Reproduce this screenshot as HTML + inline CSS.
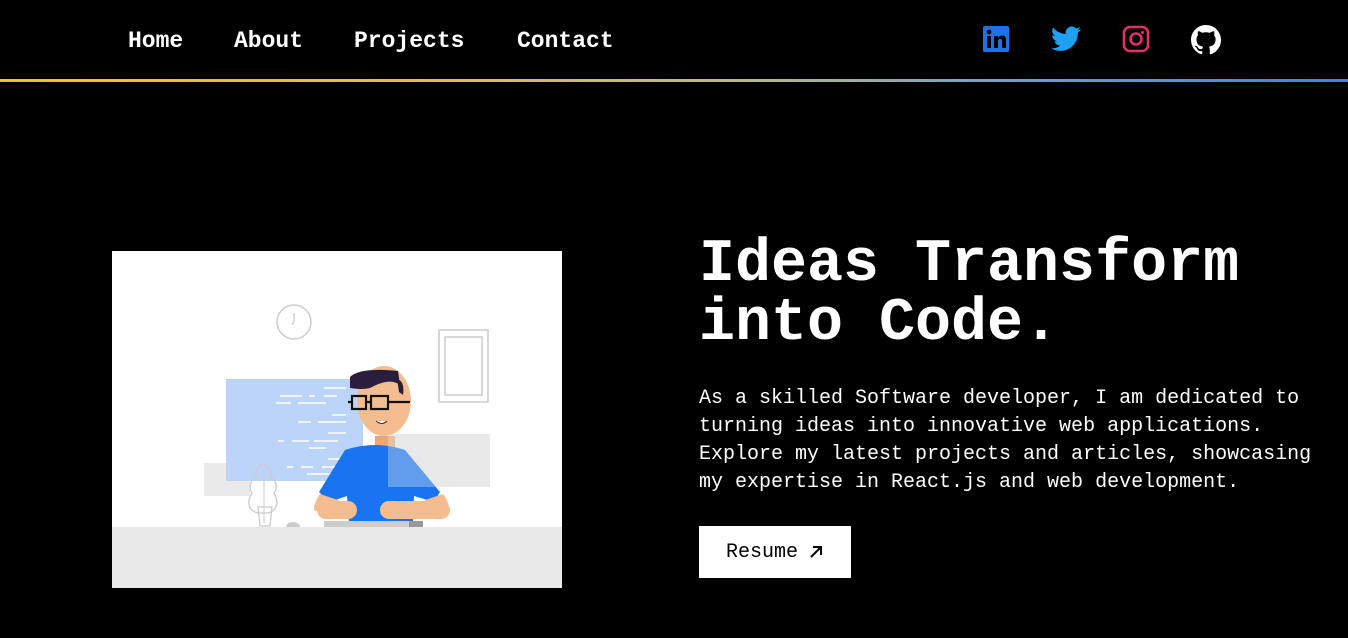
<!DOCTYPE html>
<html><head><style>
body{margin:0;background:#000;width:1348px;height:638px;overflow:hidden;font-family:"Liberation Mono","DejaVu Sans Mono",monospace;color:#fff;position:relative}
.nav a{position:absolute;top:28px;font-size:23px;font-weight:bold;color:#fff;text-decoration:none}
.bar{position:absolute;left:0;top:79px;width:1348px;height:3px;background:linear-gradient(90deg,#f5c518,#e0c040 30%,#b8b888 55%,#6a9ad0 78%,#3b82f6)}
h1{position:absolute;left:699px;top:236px;margin:0;font-size:60px;line-height:59px;font-weight:bold;letter-spacing:0}
p{position:absolute;left:699px;top:385px;margin:0;font-size:20px;line-height:28px;width:640px}
.btn{position:absolute;left:699px;top:526px;width:152px;height:52px;background:#fff;color:#000;font-size:20px;display:flex;align-items:center;justify-content:center;gap:10px}
</style></head><body>
<div class="nav"><a style="left:128px">Home</a><a style="left:234px">About</a><a style="left:354px">Projects</a><a style="left:517px">Contact</a></div>
<svg style="position:absolute;left:983px;top:26px" width="26" height="26" viewBox="0 0 26 26"><rect width="26" height="26" rx="2" fill="#1a73e8"/><rect x="4" y="10" width="4" height="12" fill="#000"/><circle cx="6" cy="6" r="2.4" fill="#000"/><path d="M11 10h4v2c1-2 3-2.5 4.5-2.5 3 0 3.5 2.5 3.5 5V22h-4v-6.5c0-1.5-.5-2.5-2-2.5s-2 1-2 2.5V22h-4z" fill="#000"/></svg>
<svg style="position:absolute;left:1051px;top:26px" width="30" height="26" viewBox="0 0 24 20"><path d="M24 2.3a10 10 0 0 1-2.8.8A5 5 0 0 0 23.3.4a10 10 0 0 1-3.1 1.2A4.9 4.9 0 0 0 11.8 6 14 14 0 0 1 1.7.9a4.9 4.9 0 0 0 1.5 6.6 5 5 0 0 1-2.2-.6 4.9 4.9 0 0 0 3.900 4.9 5 5 0 0 1-2.2.1 4.9 4.9 0 0 0 4.6 3.4A9.9 9.9 0 0 1 0 17.3 14 14 0 0 0 7.5 19.5c9 0 14-7.5 14-14v-.6A10 10 0 0 0 24 2.3z" fill="#1da1f2"/></svg>
<svg style="position:absolute;left:1122px;top:25px" width="28" height="28" viewBox="0 0 28 28"><rect x="2" y="2" width="24" height="24" rx="6" fill="none" stroke="#e1306c" stroke-width="2.6"/><circle cx="14" cy="14" r="5.5" fill="none" stroke="#e1306c" stroke-width="2.6"/><circle cx="20.5" cy="7.5" r="1.5" fill="#e1306c"/></svg>
<svg style="position:absolute;left:1191px;top:25px" width="30" height="30" viewBox="0 0 16 16"><path fill="#fff" d="M8 0C3.58 0 0 3.580 0 8c0 3.54 2.29 6.53 5.470 7.59.4.07.55-.17.55-.38v-1.33c-2.23.48-2.7-1.07-2.7-1.07-.36-.92-.89-1.17-.89-1.17-.73-.5.06-.49.06-.49.8.06 1.23.83 1.23.83.71 1.23 1.87.87 2.33.66.07-.52.28-.87.51-1.07-1.78-.2-3.64-.89-3.64-3.950 0-.87.31-1.59.82-2.15-.08-.2-.36-1.02.08-2.12 0 0 .67-.21 2.2.82a7.6 7.6 0 0 1 4 0c1.53-1.04 2.2-.82 2.2-.82.44 1.1.16 1.92.08 2.12.51.56.82 1.27.82 2.15 0 3.07-1.87 3.75-3.65 3.95.29.25.54.73.54 1.48v2.2c0 .21.15.46.55.38A8 8 0 0 0 16 8c0-4.42-3.58-8-8-8z"/></svg>
<div class="bar"></div>
<svg style="position:absolute;left:112px;top:251px" width="450" height="337" viewBox="0 0 450 337">
<rect width="450" height="337" fill="#fff"/>
<circle cx="182" cy="71" r="17" fill="none" stroke="#ccc" stroke-width="1.5"/><path d="M182 62v9l-2 3" stroke="#bbb" fill="none"/>
<rect x="327" y="79" width="49" height="72" fill="none" stroke="#ccc" stroke-width="1.5"/><rect x="333" y="86" width="37" height="58" fill="none" stroke="#ccc" stroke-width="1.5"/>
<rect x="92" y="212" width="46" height="33" fill="#eaeaea"/>
<rect x="114" y="128" width="137" height="102" fill="#bcd4f8"/>
<g stroke="#fff" stroke-width="1.5"><path d="M212 137h22M168 145h22M197 145h6M212 145h13M164 152h15M186 152h28M220 164h14M186 171h13M206 171h28M216 182h18M166 190h6M180 190h17M202 190h24M197 197h17M216 208h18M175 216h6M189 216h12M210 216h20M195 223h33"/></g>
<rect x="277" y="183" width="101" height="53" fill="#e8e8e8"/>
<path d="M146 262c-9-2-12-10-6-20-4-6-1-14 5-16-3-8 3-12 7-12s9 5 6 12c6 2 8 10 4 16 6 10 2 18-6 20z" fill="none" stroke="#ccc" stroke-width="1.3"/><path d="M152 222v50" stroke="#ccc"/><path d="M146 256h14l-2 19h-10z" fill="none" stroke="#ccc" stroke-width="1.3"/>
<rect x="263" y="185" width="20" height="20" fill="#e8a87c"/>
<path d="M207 241l26-42q30-10 60 0l35 42-6 10-20-6-1 26h-64l-2-26-18 6z" fill="#1a73f0"/>
<path d="M202 259q0-8 6-16l18 6-2 18z" fill="#f3bd90"/><path d="M337 259q0-8-6-16l-18 6 2 18z" fill="#f3bd90"/>
<rect x="205" y="250" width="40" height="18" rx="9" fill="#f3bd90"/><rect x="268" y="250" width="70" height="18" rx="9" fill="#f3bd90"/>
<ellipse cx="272" cy="150" rx="27" ry="35" fill="#f3bd90"/>
<path d="M238 126q10-10 48-6l2 14q-10-8-30 3-8 2-20 0z" fill="#2b1e3d"/><path d="M285 128q8 2 6 16l-4-3z" fill="#2b1e3d"/>
<g fill="none" stroke="#111" stroke-width="2.2"><rect x="240" y="145" width="14" height="13"/><rect x="259" y="145" width="17" height="13"/><path d="M236 151h4M254 151h5M276 151h22"/></g>
<path d="M264 170q6 5 11 0" fill="#fff" stroke="#333"/>
<rect x="276" y="183" width="102" height="53" fill="#e8e8e8" opacity=".35"/>
<rect x="212" y="270" width="98" height="6" fill="#ccc"/><rect x="297" y="270" width="14" height="6" fill="#999"/>
<path d="M174 276a7 5 0 0 1 14 0z" fill="#ccc"/>
<rect x="0" y="276" width="450" height="61" fill="#e9e9e9"/>
</svg>
<h1>Ideas Transform<br>into Code.</h1>
<p>As a skilled Software developer, I am dedicated to turning ideas into innovative web applications. Explore my latest projects and articles, showcasing my expertise in React.js and web development.</p>
<div class="btn">Resume <svg width="16" height="16" viewBox="0 0 16 16"><path d="M3 13L13 3M5 3h8v8" stroke="#000" stroke-width="2" fill="none"/></svg></div>
</body></html>
